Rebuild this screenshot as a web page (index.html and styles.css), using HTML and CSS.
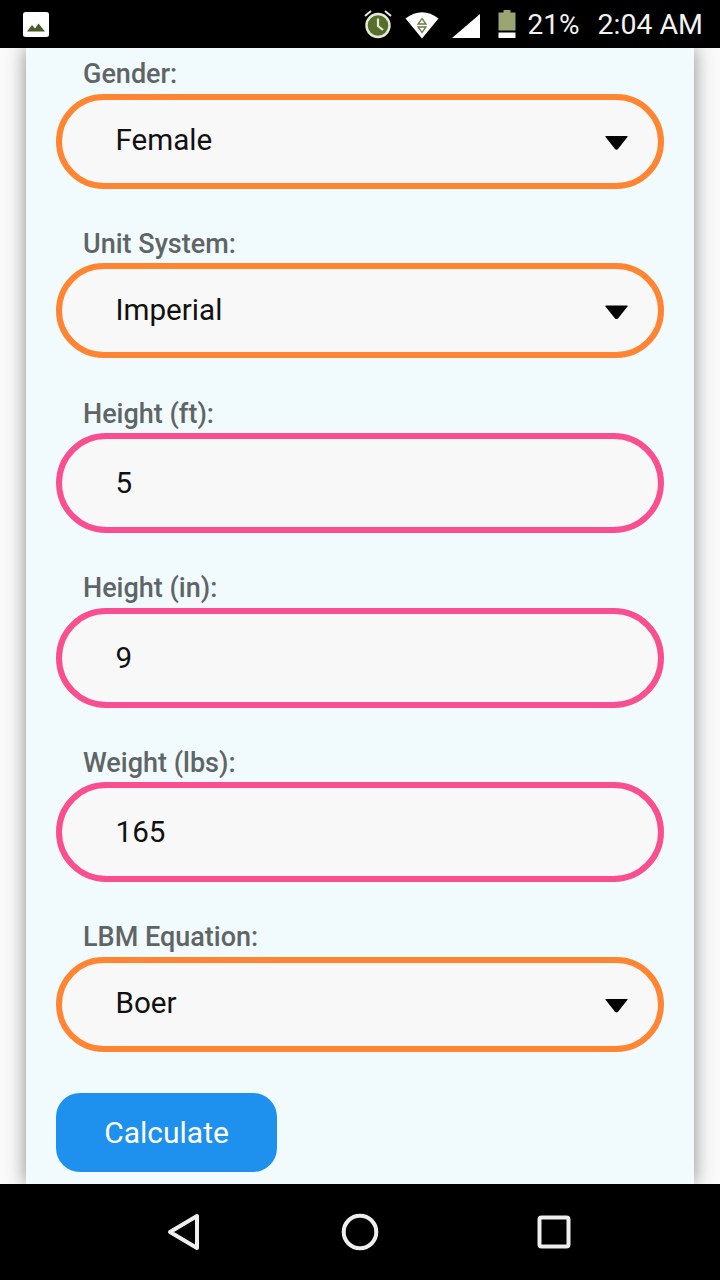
FILE: index.html
```html
<!DOCTYPE html>
<html lang="en">

<head>
  <meta charset="UTF-8" />
  <meta name="viewport" content="width=device-width, initial-scale=1.0" />
  <title>Lean Body Mass Calculator</title>
  <link rel="stylesheet" href="styles.css">
</head>

<body>
  <header class="status-bar">
    <svg class="status-photo" width="26" height="26" viewBox="0 0 26 26">
      <rect x="0" y="0" width="26" height="25" rx="2.5" fill="#fff" />
      <path d="M4 19.500 L9 13 L12 16.500 L15.500 11.500 L22 19.500 Z" fill="#4d5a2b" />
    </svg>
    <div class="status-right">
      <svg class="status-alarm" width="30" height="30" viewBox="0 0 30 30">
        <circle cx="15" cy="16.500" r="11.500" fill="#56702c" stroke="#e6ebd8" stroke-width="2.400" />
        <path d="M15 9.500 V17 L20 21" fill="none" stroke="#e6ebd8" stroke-width="2.200" />
        <path d="M2 7 L8 2 M28 7 L22 2" stroke="#e6ebd8" stroke-width="2" />
      </svg>
      <svg class="status-wifi" width="34" height="28" viewBox="0 0 34 28">
        <path d="M0.500 7.500 Q17 -5 33.500 7.500 L17 27.500 Z" fill="#fff" />
        <path d="M17 7.500 L21 13 H13 Z M13 16 H21 L17 21.500 Z" fill="#fff" stroke="#6b7a45" stroke-width="1.300" />
      </svg>
      <svg class="status-signal" width="28" height="24" viewBox="0 0 28 24">
        <path d="M0 24 L28 0 V24 Z" fill="#fff" />
      </svg>
      <svg class="status-battery" width="18" height="28" viewBox="0 0 18 28">
        <path d="M5.500 0 H12.500 V2.500 H17.500 V20.500 H0.500 V2.500 H5.500 Z" fill="#9aa672" />
        <path d="M0.500 22.500 H17.500 V28 H0.500 Z" fill="#fff" />
      </svg>
      <span class="status-percent">21%</span>
      <span class="status-time">2:04 AM</span>
    </div>
  </header>

  <main class="screen">
    <form class="card">
      <div class="field">
        <label for="gender">Gender:</label>
        <div class="select-wrap">
          <select id="gender" class="control control-select">
            <option>Female</option>
            <option>Male</option>
          </select>
        </div>
      </div>

      <div class="field">
        <label for="units">Unit System:</label>
        <div class="select-wrap">
          <select id="units" class="control control-select">
            <option>Imperial</option>
            <option>Metric</option>
          </select>
        </div>
      </div>

      <div class="field">
        <label for="feet">Height (ft):</label>
        <input id="feet" class="control control-input" type="text" value="5" />
      </div>

      <div class="field">
        <label for="inches">Height (in):</label>
        <input id="inches" class="control control-input" type="text" value="9" />
      </div>

      <div class="field">
        <label for="weight">Weight (lbs):</label>
        <input id="weight" class="control control-input" type="text" value="165" />
      </div>

      <div class="field">
        <label for="equation">LBM Equation:</label>
        <div class="select-wrap">
          <select id="equation" class="control control-select">
            <option>Boer</option>
            <option>James</option>
            <option>Hume</option>
          </select>
        </div>
      </div>

      <button class="calculate" type="button">Calculate</button>
    </form>
  </main>

  <nav class="nav-bar">
    <svg width="34" height="40" viewBox="0 0 34 40">
      <path d="M30 4 V36 L3 20 Z" fill="none" stroke="#eee" stroke-width="4" stroke-linejoin="round" />
    </svg>
    <svg class="nav-home" width="40" height="40" viewBox="0 0 40 40">
      <circle cx="20" cy="20" r="16.300" fill="none" stroke="#eee" stroke-width="4" />
    </svg>
    <svg width="34" height="34" viewBox="0 0 34 34">
      <rect x="2.500" y="2.500" width="29" height="29" rx="2" fill="none" stroke="#eee" stroke-width="4" />
    </svg>
  </nav>
</body>

</html>
```

FILE: styles.css
```css
* {
  box-sizing: border-box;
}

body {
  margin: 0;
  width: 720px;
  height: 1280px;
  display: flex;
  flex-direction: column;
  overflow: hidden;
  font-family: Roboto, "Liberation Sans", sans-serif;
  background: #fafafa;
}

.status-bar {
  height: 48px;
  flex: none;
  display: flex;
  justify-content: space-between;
  align-items: center;
  padding: 0 17px 0 23px;
  background: #000;
  color: #f2f2f2;
}

.status-photo {
  margin-top: 1px;
}

.status-right {
  display: flex;
  align-items: center;
}

.status-alarm {
  margin-right: 12px;
}

.status-wifi {
  margin-right: 13px;
  margin-top: 2px;
}

.status-signal {
  margin-right: 18px;
  margin-top: 4px;
}

.status-battery {
  margin-right: 12px;
}

.status-percent {
  margin-right: 18px;
  font-size: 28px;
}

.status-time {
  font-size: 28.5px;
}

.screen {
  flex: 1;
  min-height: 0;
  overflow: hidden;
  padding: 0 26px;
}

.card {
  display: flex;
  flex-direction: column;
  align-items: flex-start;
  gap: 39.1px;
  height: 100%;
  padding: 10.4px 30px 0;
  background: #f1fafc;
  box-shadow: 0 0 18px rgba(0, 0, 0, 0.45);
}

.field {
  width: 100%;
}

.field label {
  display: block;
  height: 30px;
  margin-bottom: 5.5px;
  padding-left: 27px;
  font-size: 27px;
  font-weight: 500;
  line-height: 33px;
  color: #5f6566;
}

.control {
  display: block;
  width: 100%;
  padding: 0 53.5px;
  border: 6px solid;
  border-radius: 50px;
  outline: none;
  appearance: none;
  font-family: inherit;
  font-size: 29.6px;
  color: #111;
  background: #f8f8f8;
}

.control-select {
  height: 95px;
  padding-bottom: 2px;
  border-color: #ff8533;
}

.control-input {
  height: 100px;
  border-color: #f94e90;
}

.select-wrap {
  position: relative;
}

.select-wrap::after {
  content: "";
  position: absolute;
  top: 42px;
  right: 36px;
  width: 23px;
  height: 14px;
  background: #000;
  clip-path: path("M1 0 H22 Q23 0 22.500 1 L13 13 Q11.500 14.500 10 13 L0.500 1 Q0 0 1 0 Z");
  pointer-events: none;
}

.calculate {
  width: 221px;
  height: 79px;
  flex: none;
  margin-top: 2.5px;
  border: none;
  border-radius: 24px;
  font-family: inherit;
  font-size: 30px;
  color: #fff;
  background: #1e90ee;
}

.nav-bar {
  height: 96px;
  flex: none;
  display: flex;
  align-items: center;
  padding-left: 167px;
  background: #000;
}

.nav-home {
  margin: 0 157px 0 139px;
}
```
